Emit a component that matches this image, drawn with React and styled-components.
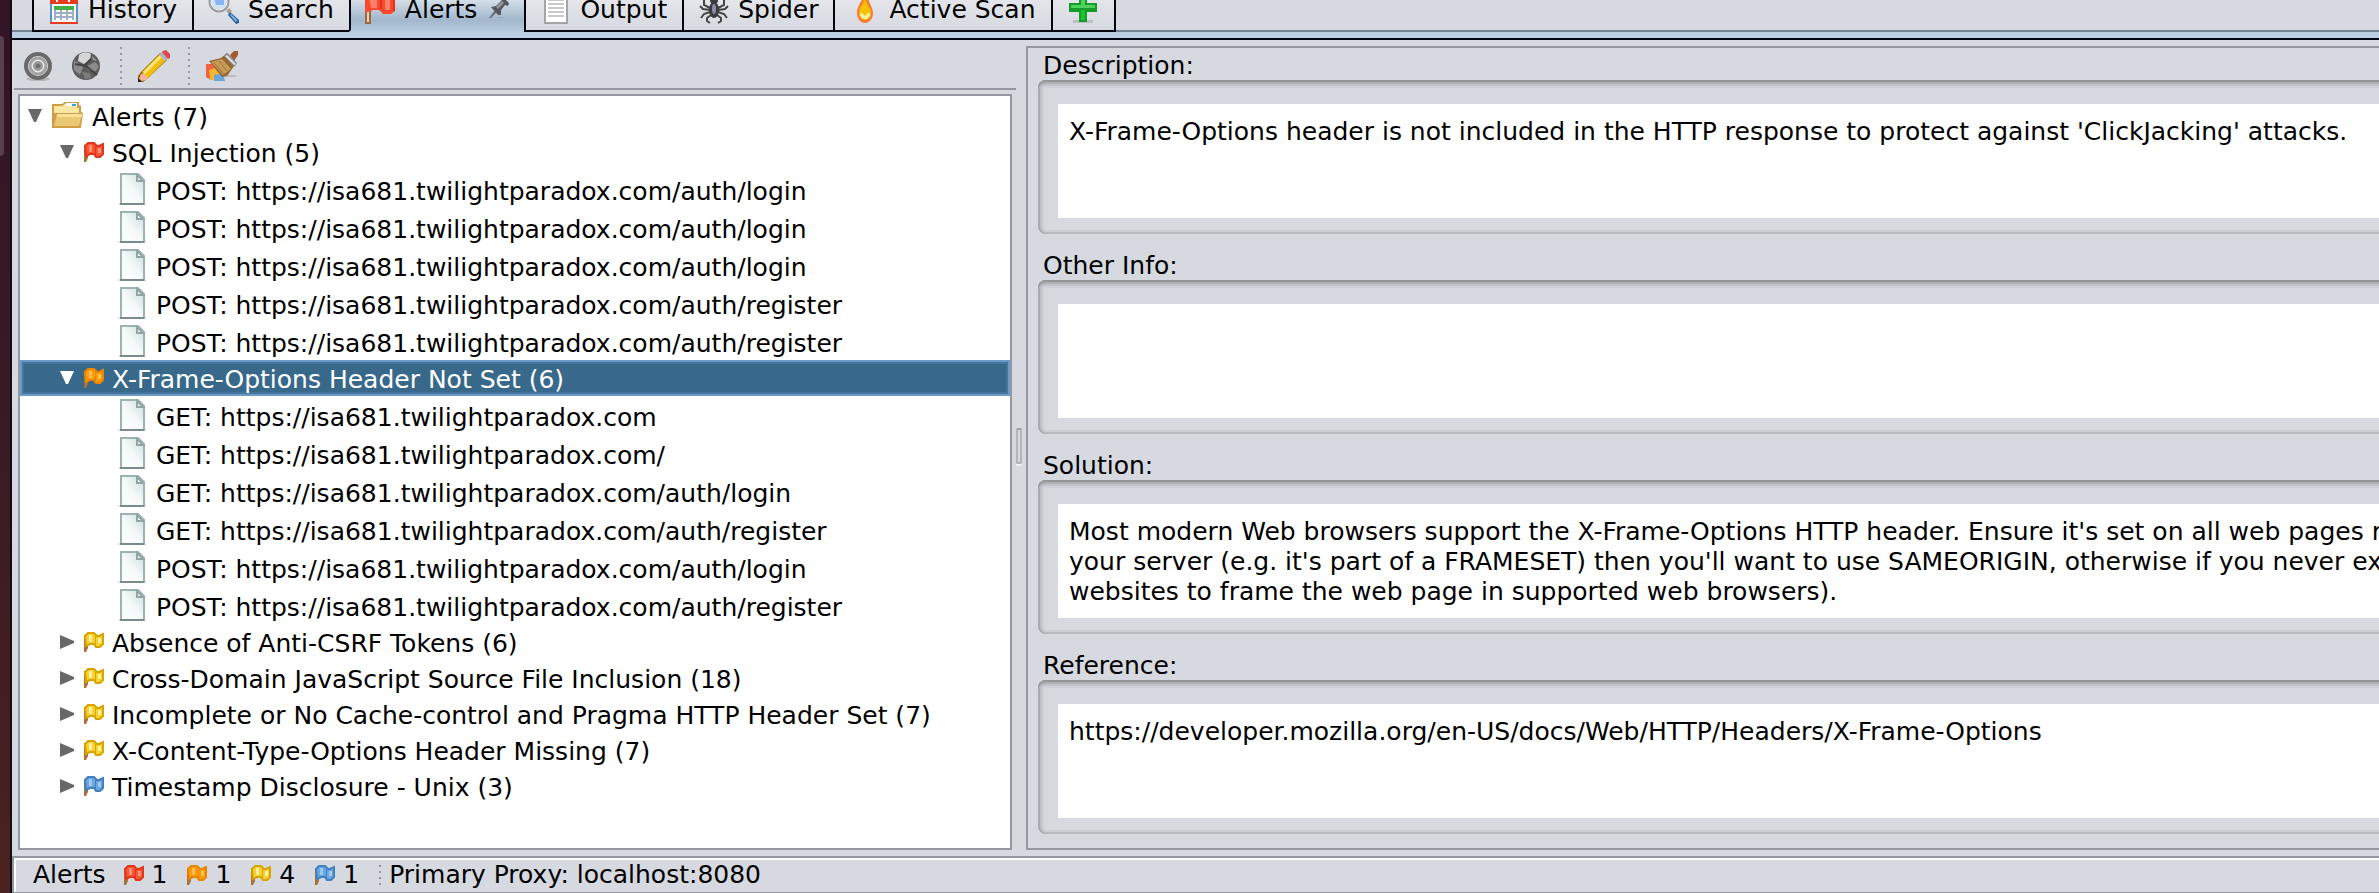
import React from "react";
import styled, { createGlobalStyle, css } from "styled-components";

const GlobalStyle = createGlobalStyle`
  * { box-sizing: border-box; }
  body {
    margin: 0;
    background: #d6d9e0;
    color: #000;
    font: 25px/30px "DejaVu Sans", Verdana, sans-serif;
  }
  button, textarea { font: inherit; color: inherit; }
  svg { display: block; flex: none; }
`;

const Screen = styled.div`
  display: flex;
  min-height: 100vh;
  overflow: hidden;
`;

const DesktopEdge = styled.aside`
  flex: none;
  width: 12px;
  padding-top: 36px;
  border-right: 2px solid #150d16;
  background: linear-gradient(#331427, #3a1a24 50%, #4a221f);
`;

const LauncherTile = styled.div`
  width: 4px;
  height: 120px;
  border-radius: 0 4px 4px 0;
  background: #58414f;
`;

const Window = styled.div`
  flex: 1;
  min-width: 0;
  display: flex;
  flex-direction: column;
`;

/* ---------- tabs ---------- */

const TabStrip = styled.nav`
  display: flex;
  align-items: flex-end;
  height: 32px;
  padding-left: 20px;
  overflow: hidden;
  background: linear-gradient(#d6d9e0 30px, #768397 30px);
`;

const Tab = styled.button`
  display: flex;
  flex: none;
  align-items: center;
  gap: 8px;
  height: 50px;
  margin: 0;
  padding: 10px 15px 6px 14px;
  border: 0 solid #05050f;
  border-width: 0 0 2px 2px;
  background: linear-gradient(#ecedf2, #d6d9e0);
  white-space: nowrap;
  &:last-child { border-right-width: 2px; }
  ${(p) =>
    p.$selected &&
    css`
      border-bottom-color: #b6cbe0;
      background: linear-gradient(#d3dee8 18px, #a2b7cc 38px, #b3c8dc);
    `}
`;

const TabLabel = styled.span`
  padding-top: 4px;
`;

const PinSlot = styled.span`
  padding-left: 4px;
`;

const TabUnderline = styled.div`
  flex: none;
  height: 8px;
  border-bottom: 2px solid #05050f;
  background: #bbcfe3;
`;

/* ---------- split pane ---------- */

const Split = styled.main`
  flex: 1;
  display: flex;
  min-height: 0;
`;

const AlertsPane = styled.section`
  flex: 0 1 1004px;
  min-width: 0;
  display: flex;
  flex-direction: column;
  padding: 0 0 6px 2px;
`;

const Toolbar = styled.div`
  display: flex;
  flex: none;
  align-items: center;
  gap: 16px;
  height: 50px;
  padding: 4px 8px 0;
  border-bottom: 2px solid #9297a1;
`;

const ToolButton = styled.button`
  width: 32px;
  height: 32px;
  padding: 0;
  border: 0;
  background: none;
`;

const Dots = styled.div`
  flex: none;
  width: ${(p) => p.$width}px;
  height: ${(p) => p.$height}px;
  background: repeating-linear-gradient(#9297a1 0 2px, transparent 2px 6px) right / 2px 100% no-repeat;
`;

const Tree = styled.ul`
  flex: 1;
  margin: 4px 4px 0;
  padding: 2px 0;
  border: 2px solid #9297a1;
  background: #fff;
  list-style: none;
`;

const Branch = styled.ul`
  margin: 0;
  padding: 0;
  list-style: none;
`;

const Row = styled.div`
  display: flex;
  align-items: center;
  height: ${(p) => (p.$kind === "file" ? 38 : 36)}px;
  padding-left: ${(p) => ({ root: 8, alert: 40, file: 98 })[p.$kind]}px;
  white-space: nowrap;
  ${(p) =>
    p.$selected &&
    css`
      color: #fff;
      background: #39698a;
      box-shadow: inset 0 0 0 2px #6a9ac6, inset 0 0 0 4px #44759a;
    `}
`;

const Toggle = styled.button`
  width: 14px;
  height: 14px;
  margin: 0 10px 0 0;
  padding: 0;
  border: 0;
  background: none;
`;

const RowLabel = styled.span`
  margin-left: 8px;
  padding-top: ${(p) => (p.$kind === "file" ? 6 : 4)}px;
`;

const Divider = styled.div`
  flex: none;
  display: flex;
  align-items: center;
  width: 10px;
  padding-bottom: 4px;
`;

const Grip = styled.div`
  width: 6px;
  height: 36px;
  border: 2px solid #b1b4bb;
  border-top-color: #9c9fa8;
  border-radius: 2px;
  box-shadow: 0 2px 0 #eff0f3;
`;

/* ---------- details ---------- */

const Details = styled.section`
  flex: 1;
  min-width: 0;
  display: flex;
  flex-direction: column;
  margin: 6px 0;
  border: 2px solid #9297a1;
  border-right: 0;
`;

const Field = styled.div`
  flex: 1;
  display: flex;
  flex-direction: column;
  padding: 2px 0 14px 10px;
`;

const FieldLabel = styled.label`
  height: 30px;
  padding-left: 5px;
  line-height: 32px;
`;

const Well = styled.div`
  flex: 1;
  display: flex;
  padding: 24px 0 16px 20px;
  border-radius: 8px 0 0 8px;
  box-shadow: inset 0 2px 0 #939599, inset 0 4px 0 #aeb0b4,
    inset 2px 0 0 #a9abb0, inset 0 -2px 0 #babcc1, inset 0 6px 0 #c1c3c8,
    inset 4px 0 0 #c0c2c7, inset 0 -4px 0 #cbcdd2, inset 0 8px 0 #cdd0d6,
    inset 6px 0 0 #ced0d6;
`;

const TextArea = styled.textarea`
  flex: 1;
  min-width: 0;
  min-height: 114px;
  margin: 0;
  padding: 13px 0 0 11px;
  border: 0;
  outline: 0;
  border-radius: 0;
  background: #fff;
  resize: none;
  overflow: hidden;
  white-space: pre;
`;

/* ---------- status bar ---------- */

const StatusBar = styled.footer`
  display: flex;
  flex: none;
  align-items: center;
  gap: 20px;
  height: 37px;
  padding-left: 19px;
  border-top: 2px solid #9297a1;
  border-left: 2px solid #9297a1;
  border-bottom: 1px solid #9297a1;
  box-shadow: inset 2px 2px 0 #fff;
  white-space: nowrap;
`;

const Counter = styled.span`
  display: flex;
  align-items: center;
  gap: 8px;
`;

const StatusTitle = styled.span`
  margin-right: -2px;
`;

const Proxy = styled.span`
  margin-left: -12px;
`;

/* ---------- icons ---------- */

const FLAGS = {
  red: ["#fb5434", "#ff9478", "#e0361c"],
  orange: ["#ff9a08", "#ffc050", "#e88600"],
  yellow: ["#f8d22c", "#fdf0a4", "#d9a400"],
  blue: ["#6aa6e2", "#9cc8f2", "#4580be"],
};

const Flag = ({ color, size = 20 }) => {
  const [base, light, dark] = FLAGS[color];
  return (
    <svg width={size} height={size} viewBox="0 0 20 20" aria-hidden="true">
      <path d="M0 3h2l2 11v2l-2 4H0z" fill="#a8713c" />
      <path d="M1 4 4 1h6l3 3h2l4-2v10l-3 3h-4l-2-3H6l-4 2z" fill={base} stroke={dark} strokeWidth="2" />
      <path d="M5 3h3v7H5zM14 6h3v5h-3z" fill={light} />
      <path d="M11 4h1v9h-1z" fill={dark} />
    </svg>
  );
};

const BigFlag = () => (
  <svg width="32" height="32" viewBox="0 0 32 32" aria-hidden="true">
    <path d="M0 4h6v28H0z" fill="#9b6a3f" />
    <path d="M2 4h2v26H2z" fill="#f2d3ae" />
    <path d="M0 2 8 0h8l4 4h5l5-3v18l-4 3h-8l-4-4H8l-8 3z" fill="#f8482e" />
    <path d="M4 4h8v12H6zM20 8h5v10h-5z" fill="#ff8068" />
    <path d="M15 3h2v14h-2zM28 4h2v15h-2z" fill="#e5301c" />
  </svg>
);

const Calendar = () => (
  <svg width="32" height="32" viewBox="0 0 32 32" aria-hidden="true">
    <path d="M2 4h28v28H2z" fill="#5d93cc" />
    <path d="M4 12h24v18H4z" fill="#f4f8fc" />
    <path d="M2 2h28v10H2zM2 30h28v2H2z" fill="#e63b1c" />
    <path d="M8 6h2v4H8zM20 6h2v4h-2z" fill="#fff" />
    <path d="M6 14h20v4H6z" fill="#44b044" />
    <path d="M6 18h20v10H6z" fill="#9fb0c2" />
    <path d="M8 18h4v2H8zM14 18h4v2h-4zM20 18h4v2h-4zM8 22h4v2H8zM14 22h4v2h-4zM20 22h4v2h-4zM8 26h4v2H8zM14 26h4v2h-4zM20 26h4v2h-4z" fill="#fff" />
  </svg>
);

const Magnifier = () => (
  <svg width="32" height="32" viewBox="0 0 32 32" aria-hidden="true">
    <path d="m18 19 3-3 3 3-3 3z" fill="#a9a294" />
    <path d="m22 20 9 8v3l-3 1-8-9z" fill="#27619f" />
    <path d="m23 22 6 6-1 2-6-7z" fill="#83bbea" />
    <circle cx="11" cy="10" r="9" fill="#cfe2fa" stroke="#9a9a9c" strokeWidth="3" />
    <circle cx="11" cy="10" r="8" fill="none" stroke="#fff" strokeWidth="1" />
    <path d="M6 5h10v8H8z" fill="#78a9f2" opacity=".8" />
  </svg>
);

const Pin = () => (
  <svg width="20" height="24" viewBox="0 0 20 24" aria-hidden="true">
    <path d="M8 21h7v1H8z" fill="#9aabbd" />
    <path d="m0 22 6-8 2 2-6 6z" fill="#6c7178" />
    <path d="m2 11 5-1 6-6-1-3h2l6 6-1 3-3-1-4 5v5h-3z" fill="#55585c" />
    <path d="m7 11 6-6 2 2-6 6z" fill="#93979c" />
  </svg>
);

const OutputPage = () => (
  <svg width="32" height="32" viewBox="0 0 32 32" aria-hidden="true">
    <path d="M4 0h24v32H4z" fill="#a5a5a5" />
    <path d="M6 0h20v30H6z" fill="#fff" />
    <path d="M8 3h16v2H8zM8 7h16v2H8zM8 11h16v2H8zM8 15h16v2H8zM8 19h16v2H8zM8 23h16v2H8z" fill="#c9c9c9" />
  </svg>
);

const Spider = () => (
  <svg width="32" height="32" viewBox="0 0 32 32" aria-hidden="true">
    <path
      d="M12 16 6 13V8L3 5M20 16l6-3V8l3-3M12 18l-7-1-3-3M20 18l7-1 3-3M12 20l-6 2-3 4M20 20l6 2 3 4M13 23l-4 3v3l3 2M19 23l4 3v3l-3 2"
      fill="none" stroke="#444" strokeWidth="2"
    />
    <ellipse cx="16" cy="18" rx="5" ry="8" fill="#3b3b40" />
    <circle cx="16" cy="8" r="4" fill="#3b3b40" />
    <ellipse cx="16" cy="17" rx="2" ry="5" fill="#8c8ca4" />
  </svg>
);

const Flame = () => (
  <svg width="32" height="32" viewBox="0 0 32 32" aria-hidden="true">
    <path d="M15 0c1 7-7 12-7 21 0 6 4 10 8 10s8-4 8-10c0-5-3-8-4-12-1-4-2-7-5-9z" fill="#fb7a35" />
    <path d="M15 5c1 6-5 10-5 16 0 4 3 7 6 7s6-3 6-7c0-4-3-6-4-10z" fill="#f6c200" />
    <path d="M11 21h10c0 4-2 6-5 6s-5-2-5-6z" fill="#fff3a0" />
    <path d="m13 21 3-4 3 4-3 3z" fill="#f6c200" />
  </svg>
);

const Plus = () => (
  <svg width="32" height="32" viewBox="0 0 32 32" aria-hidden="true">
    <path d="M6 28h20v3H6z" fill="#bdbfc4" />
    <path d="M12 2h8v9h10v9H20v10h-8V20H2v-9h10z" fill="#169c2a" />
    <path d="M14 4h4v9h10v3H4v-3h10z" fill="#4fd15a" />
    <path d="M14 18h4v10h-4z" fill="#14c828" />
  </svg>
);

const Target = () => (
  <svg width="32" height="32" viewBox="0 0 32 32" aria-hidden="true">
    <ellipse cx="16" cy="29" rx="12" ry="2" fill="#b4b6bb" />
    <circle cx="16" cy="16" r="12" fill="#f0f0f0" stroke="#6a6a6a" strokeWidth="4" />
    <circle cx="16" cy="16" r="8" fill="#e8e8e8" stroke="#a2a2a2" strokeWidth="3" />
    <circle cx="16" cy="16" r="4" fill="#8d8d8d" stroke="#9a9a9a" strokeWidth="2" />
    <circle cx="16" cy="16" r="2" fill="#6a6a6a" />
  </svg>
);

const Globe = () => (
  <svg width="32" height="32" viewBox="0 0 32 32" aria-hidden="true">
    <circle cx="16" cy="16" r="14" fill="#5c5c5c" />
    <path d="M9 5c4-4 9-3 12-1l-1 6-6 4-6-3z" fill="#d5d5d5" />
    <path d="m4 11 3 1 6 5-3 8-6-5zM17 16l8-4 4 4-3 5-8-1z" fill="#8c8c8c" />
    <path d="m12 22 8 1 1 5-6 1z" fill="#7c7c7c" />
    <path d="m22 6 5 5-4-1z" fill="#a5a5a5" />
    <path d="M5 14l11 2 11 9M15 15l6-6" stroke="#444" strokeWidth="2" fill="none" />
  </svg>
);

const Pencil = () => (
  <svg width="32" height="32" viewBox="0 0 32 32" aria-hidden="true">
    <path d="M0 32v-6l3-4L22 3l7 7L9 29l-4 3z" fill="#8f6206" />
    <path d="m3 24 3-1 4 4-1 3-5 1-3-2z" fill="#f4b29a" />
    <path d="M0 28 4 32H0z" fill="#222" />
    <path d="M4 22 22 4l6 6L10 28z" fill="#f3bd12" />
    <path d="M5 22 22 5l2 2L7 24z" fill="#ffe879" />
    <path d="m21 5 4-4 6 6-4 4z" fill="#b3b3b8" />
    <path d="m25 1 3-1 4 4v4l-2 1-6-7z" fill="#de4550" />
  </svg>
);

const Brush = () => (
  <svg width="32" height="32" viewBox="0 0 32 32" aria-hidden="true">
    <path d="M18 25h12v2H16z" fill="#babcc1" />
    <path d="m24 5 4-4h4v4l-4 6z" fill="#a45a2d" />
    <path d="m0 14 6 0 5 7-6 9-5-3z" fill="#f2613f" />
    <path d="m3 20 6-2 6 6-6 7-5-2z" fill="#f5b52f" />
    <path d="m8 25 9-2 2 8H8z" fill="#69a5df" />
    <path d="M3 11 15 8l6-5 9 10-4 6-5 7-5 1z" fill="#94682f" />
    <path d="m5 12 11-3 9 10-8 6z" fill="#c99b58" />
    <path d="m8 13 10 11M13 11l8 10" stroke="#9c7235" strokeWidth="1" />
    <path d="m18 6 3-3 10 10-3 4z" fill="#858585" />
    <path d="m19 6 2-1 9 9-2 1z" fill="#e2e2e2" />
  </svg>
);

const Folder = () => (
  <svg width="32" height="28" viewBox="0 0 32 28" aria-hidden="true">
    <path d="M0 2h10l3-2h14v3l2 1v6l2 1-2 15H0z" fill="#cf9f45" />
    <path d="M2 4h8l3-2h12v4h2v5H2z" fill="#fbe7a4" />
    <path d="M14 1h11v3H14z" fill="#fff" />
    <path d="M20 2h4v2h-4z" fill="#36a5e8" />
    <path d="M5 12h25l-3 12H2z" fill="#edc874" />
    <path d="M5 12h25v3H5z" fill="#fbe19a" />
  </svg>
);

const Page = () => (
  <svg width="30" height="32" viewBox="0 0 30 32" aria-hidden="true">
    <defs>
      <linearGradient id="sheet" x1="0" y1="1" x2="1" y2="0">
        <stop offset="0" stopColor="#fff" />
        <stop offset=".5" stopColor="#f4f9f8" />
        <stop offset="1" stopColor="#c5dcdb" />
      </linearGradient>
    </defs>
    <path d="M0 30h28v2H0z" fill="#e4e6e6" />
    <path d="M3 1h17l6 6v24H3z" fill="url(#sheet)" stroke="#9db3b1" strokeWidth="2" />
    <path d="M2 30h24v2H2z" fill="#7b8b8b" />
    <path d="M19 2v6h6z" fill="#fff" stroke="#8fa6a5" strokeWidth="2" />
  </svg>
);

const Triangle = ({ open, fill }) => (
  <svg width="14" height="14" viewBox="0 0 14 14" aria-hidden="true">
    <path d={open ? "M0 0h14L8 13H6z" : "M0 0v14l14-6V6z"} fill={fill} />
  </svg>
);

/* ---------- data ---------- */

const HOST = "https://isa681.twilightparadox.com";

const TABS = [
  { name: "History", Icon: Calendar },
  { name: "Search", Icon: Magnifier },
  { name: "Alerts", Icon: BigFlag, selected: true },
  { name: "Output", Icon: OutputPage },
  { name: "Spider", Icon: Spider },
  { name: "Active Scan", Icon: Flame },
];

const ALERTS = [
  {
    name: "SQL Injection (5)",
    color: "red",
    files: [
      `POST: ${HOST}/auth/login`,
      `POST: ${HOST}/auth/login`,
      `POST: ${HOST}/auth/login`,
      `POST: ${HOST}/auth/register`,
      `POST: ${HOST}/auth/register`,
    ],
  },
  {
    name: "X-Frame-Options Header Not Set (6)",
    color: "orange",
    selected: true,
    files: [
      `GET: ${HOST}`,
      `GET: ${HOST}/`,
      `GET: ${HOST}/auth/login`,
      `GET: ${HOST}/auth/register`,
      `POST: ${HOST}/auth/login`,
      `POST: ${HOST}/auth/register`,
    ],
  },
  { name: "Absence of Anti-CSRF Tokens (6)", color: "yellow" },
  { name: "Cross-Domain JavaScript Source File Inclusion (18)", color: "yellow" },
  { name: "Incomplete or No Cache-control and Pragma HTTP Header Set (7)", color: "yellow" },
  { name: "X-Content-Type-Options Header Missing (7)", color: "yellow" },
  { name: "Timestamp Disclosure - Unix (3)", color: "blue" },
];

const FIELDS = [
  {
    id: "description",
    label: "Description:",
    text: "X-Frame-Options header is not included in the HTTP response to protect against 'ClickJacking' attacks.",
  },
  { id: "other", label: "Other Info:", text: "" },
  {
    id: "solution",
    label: "Solution:",
    text: [
      "Most modern Web browsers support the X-Frame-Options HTTP header. Ensure it's set on all web pages returned",
      "your server (e.g. it's part of a FRAMESET) then you'll want to use SAMEORIGIN, otherwise if you never expect",
      "websites to frame the web page in supported web browsers).",
    ].join("\n"),
  },
  {
    id: "reference",
    label: "Reference:",
    text: "https://developer.mozilla.org/en-US/docs/Web/HTTP/Headers/X-Frame-Options",
  },
];

const COUNTS = [["red", 1], ["orange", 1], ["yellow", 4], ["blue", 1]];

const AlertNode = ({ alert }) => (
  <li role="treeitem" aria-expanded={!!alert.files} aria-selected={!!alert.selected}>
    <Row $kind="alert" $selected={alert.selected}>
      <Toggle aria-label={`Toggle ${alert.name}`}>
        <Triangle open={!!alert.files} fill={alert.selected ? "#fff" : "#686868"} />
      </Toggle>
      <Flag color={alert.color} />
      <RowLabel>{alert.name}</RowLabel>
    </Row>
    {alert.files && (
      <Branch role="group">
        {alert.files.map((file, i) => (
          <li role="treeitem" key={i}>
            <Row $kind="file">
              <Page />
              <RowLabel $kind="file">{file}</RowLabel>
            </Row>
          </li>
        ))}
      </Branch>
    )}
  </li>
);

export default function App() {
  return (
    <Screen>
      <GlobalStyle />
      <DesktopEdge>
        <LauncherTile />
      </DesktopEdge>
      <Window>
        <TabStrip>
          {TABS.map(({ name, Icon, selected }) => (
            <Tab key={name} $selected={selected}>
              <Icon />
              <TabLabel>{name}</TabLabel>
              {selected && (
                <PinSlot>
                  <Pin />
                </PinSlot>
              )}
            </Tab>
          ))}
          <Tab aria-label="Add tab">
            <Plus />
          </Tab>
        </TabStrip>
        <TabUnderline />
        <Split>
          <AlertsPane>
            <Toolbar>
              <ToolButton aria-label="Scope"><Target /></ToolButton>
              <ToolButton aria-label="Link with sites"><Globe /></ToolButton>
              <Dots $width={4} $height={38} />
              <ToolButton aria-label="Edit alert"><Pencil /></ToolButton>
              <Dots $width={4} $height={38} />
              <ToolButton aria-label="Clear alerts"><Brush /></ToolButton>
            </Toolbar>
            <Tree role="tree" aria-label="Alerts">
              <li role="treeitem" aria-expanded="true">
                <Row $kind="root">
                  <Toggle aria-label="Toggle Alerts">
                    <Triangle open fill="#686868" />
                  </Toggle>
                  <Folder />
                  <RowLabel>Alerts (7)</RowLabel>
                </Row>
                <Branch role="group">
                  {ALERTS.map((alert) => (
                    <AlertNode key={alert.name} alert={alert} />
                  ))}
                </Branch>
              </li>
            </Tree>
          </AlertsPane>
          <Divider role="separator" aria-orientation="vertical">
            <Grip />
          </Divider>
          <Details>
            {FIELDS.map(({ id, label, text }) => (
              <Field key={id}>
                <FieldLabel htmlFor={id}>{label}</FieldLabel>
                <Well>
                  <TextArea id={id} readOnly wrap="off" rows={3} value={text} />
                </Well>
              </Field>
            ))}
          </Details>
        </Split>
        <StatusBar>
          <StatusTitle>Alerts</StatusTitle>
          {COUNTS.map(([color, count]) => (
            <Counter key={color}>
              <Flag color={color} />
              {count}
            </Counter>
          ))}
          <Dots $width={2} $height={20} />
          <Proxy>Primary Proxy: localhost:8080</Proxy>
        </StatusBar>
      </Window>
    </Screen>
  );
}
